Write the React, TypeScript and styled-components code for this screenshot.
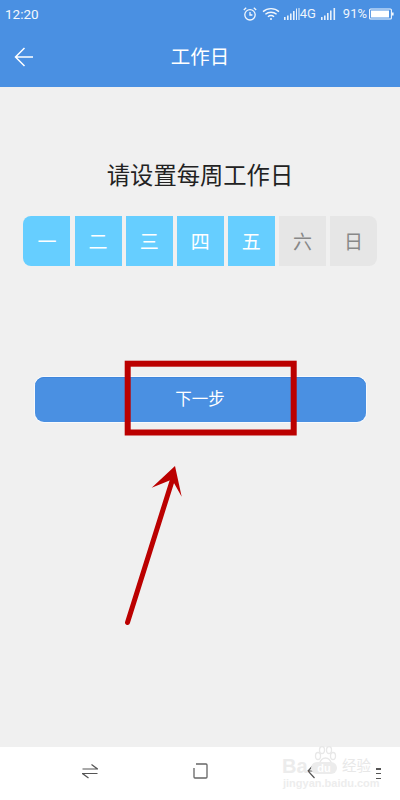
import React from "react";
import styled, { createGlobalStyle } from "styled-components";

const Global = createGlobalStyle`
  html, body { margin: 0; padding: 0; background: #f0f0f0; }
  #root { width: 400px; height: 800px; }
`;
const FONT = `"Roboto", "Noto Sans CJK SC", sans-serif`;

const Page = styled.div`
  position: relative; width: 400px; height: 800px; overflow: hidden;
  display: flex; flex-direction: column; background: #f0f0f0; font-family: ${FONT};
`;
const Header = styled.header`
  height: 87px; flex: none; background: #4a90e2; color: #fff;
  display: flex; flex-direction: column;
`;
const StatusBar = styled.div`
  height: 28px; display: flex; align-items: center; justify-content: space-between;
  padding: 0 5px 0 5px;
`;
const Clock = styled.span`font-size: 13.5px; line-height: 28px; color: #f4f8fd;`;
const StatusIcons = styled.div`display: flex; align-items: center;`;
const StatusText = styled.span<{ $ml: number }>`
  font-size: 13px; line-height: 28px; margin-left: ${p => p.$ml}px; color: #eef5fc;
`;
const TitleRow = styled.div`
  flex: 1; position: relative; display: flex; align-items: center; justify-content: center;
`;
const Title = styled.h1`margin: 0; font-size: 19.5px; font-weight: 400; line-height: 60px;`;
const Back = styled.svg`position: absolute; left: 14px; top: 19px;`;
const Main = styled.main`
  flex: 1; display: flex; flex-direction: column; align-items: center;
  padding-top: 73px;
`;
const Prompt = styled.h2`
  margin: 0; font-size: 23.3px; line-height: 32px; font-weight: 400; color: #222;
`;
const Days = styled.div`
  margin-top: 24px; margin-left: 0.5px; display: grid; grid-template-columns: repeat(7, 47px); gap: 4.1px;
  border-radius: 8px; overflow: hidden;
`;
const Day = styled.div<{ $on: boolean }>`
  height: 50px; display: flex; align-items: center; justify-content: center;
  font-size: 19px; padding-bottom: 2px; box-sizing: border-box;
  background: ${p => (p.$on ? "#66ceff" : "#e6e6e6")};
  color: ${p => (p.$on ? "#fff" : "#888")};
`;
const NextButton = styled.button`
  margin-top: 111px; width: 331px; height: 44.5px; border: 0; border-radius: 9px; padding: 0 0 2px;
  background: #4a90e2; color: #fff; font: 400 16.5px ${FONT};
  box-shadow: inset 0 1px 0 #3f86dc, 0 0 0 1px #f8fafd;
`;
const NavBar = styled.nav`
  height: 53px; flex: none; background: #fff; position: relative;
  display: flex; align-items: center; padding-bottom: 6px; box-sizing: border-box;
`;
const NavSlot = styled.div<{ $w: number }>`
  width: ${p => p.$w}px; flex: none; display: flex; justify-content: center;
`;
const Annotation = styled.svg`position: absolute; left: 0; top: 0; pointer-events: none;`;
const Watermark = styled.div`
  position: absolute; left: 282px; top: 746px; width: 96px; height: 44px;
`;
const WmBai = styled.span`
  position: absolute; left: 0; top: 10px; font: 700 20px/20px "Liberation Sans", sans-serif; color: #ececec;
`;
const WmDu = styled.span`
  position: absolute; left: 29px; top: 16px; width: 26px; height: 12px; border-radius: 6px;
  text-align: center; background: #ececec; color: #fff;
  font: 700 11px/12px "Liberation Sans", sans-serif;
`;
const WmJing = styled.span`
  position: absolute; left: 1px; top: 31px; font: 700 11px/13px "Liberation Sans", sans-serif;
  color: #ededed; white-space: nowrap;
`;
const WmCn = styled.span`
  position: absolute; left: 60px; top: 11px; font: 400 14.5px/16px "Noto Sans CJK SC", sans-serif; color: #e8e8e8;
`;
const WmPaw = styled.svg`position: absolute; left: 28px; top: 0;`;
const NavEdge = styled.div`
  position: absolute; left: 376px; top: 768px; width: 5px; height: 11px;
  display: flex; flex-direction: column; justify-content: space-between;
`;
const NavEdgeBar = styled.i`display: block; height: 1.5px; background: #555;`;

const days = ["一", "二", "三", "四", "五", "六", "日"];

export default function App() {
  return (
    <Page>
      <Global />
      <Header>
        <StatusBar>
          <Clock>12:20</Clock>
          <StatusIcons>
            <svg width="16" height="16" viewBox="0 0 16 16" fill="none" stroke="#f2f7fd" strokeWidth="1.3">
              <circle cx="8" cy="8.8" r="5.2" /><path d="M8 6v3h2.4M1.8 4 4.2 1.8M14.2 4 11.8 1.8" />
            </svg>
            <svg width="18" height="14" viewBox="0 0 18 14" fill="none" stroke="#f2f7fd" strokeWidth="1.4" style={{ marginLeft: 4 }}>
              <path d="M1 4.6c4.6-4 11.4-4 16 0M3.4 7.3c3.2-2.7 8-2.7 11.2 0M5.9 9.8c1.8-1.4 4.400-1.400 6.200 0" /><circle cx="9" cy="12" r="1" fill="#f2f7fd" stroke="none" />
            </svg>
            <svg width="16" height="14" viewBox="0 0 16 14" fill="#e8f1fb" style={{ marginLeft: 4 }}>
              <path d="M0 10h1.600v3H0zM3 8.500h1.600V13H3zM6 6.500h1.600V13H6zM9 4h1.600v9H9zM12 1.500h1v11.500h-1zM14.500 1h1v12h-1z" />
            </svg>
            <StatusText $ml={0}>4G</StatusText>
            <svg width="16" height="14" viewBox="0 0 16 14" fill="#e8f1fb" style={{ marginLeft: 5 }}>
              <path d="M0 10h1.600v3H0zM3 8.500h1.600V13H3zM6 6h1.600v7H6zM9 3.500h1.600V13H9zM12.500 1h1.600v12h-1.600z" />
            </svg>
            <StatusText $ml={6}>91%</StatusText>
            <svg width="26" height="12" viewBox="0 0 26 12" style={{ marginLeft: 2 }}>
              <rect x="0.600" y="1" width="21.800" height="10" rx="1" fill="none" stroke="#f2f7fd" strokeWidth="1.100" />
              <rect x="2" y="2.500" width="18" height="7" fill="#fff" />
              <rect x="23" y="4.500" width="1.600" height="3" fill="#f2f7fd" />
            </svg>
          </StatusIcons>
        </StatusBar>
        <TitleRow>
          <Back width="20" height="20" viewBox="0 0 20 20" fill="none" stroke="#fff" strokeWidth="1.500">
            <path d="M1.500 10H19M10.500 1 1.500 10l9 9" />
          </Back>
          <Title>工作日</Title>
        </TitleRow>
      </Header>
      <Main>
        <Prompt>请设置每周工作日</Prompt>
        <Days>
          {days.map((d, i) => <Day key={d} $on={i < 5}>{d}</Day>)}
        </Days>
        <NextButton>下一步</NextButton>
      </Main>
      <NavBar>
        <NavSlot $w={179}>
          <svg width="16" height="16" viewBox="0 0 16 16" fill="none" stroke="#555" strokeWidth="1.200">
            <path d="M0.500 6H15.500L9.500 1.500M15.500 10.500H0.500L6.500 15" />
          </svg>
        </NavSlot>
        <NavSlot $w={44}>
          <svg width="16" height="16" viewBox="0 0 16 16" fill="none" stroke="#666" strokeWidth="1.300">
            <path d="M1 5V14q0 1 1 1h11q1 0 1-1V2q0-1-1-1H3" />
          </svg>
        </NavSlot>
        <NavSlot $w={184}>
          <svg width="16" height="16" viewBox="0 0 16 16" fill="none" stroke="#555" strokeWidth="1.200">
            <path d="M1 8H15M7.500 1 1 8l6.500 7" />
          </svg>
        </NavSlot>
      </NavBar>
      <Watermark>
        <WmPaw width="30" height="20" viewBox="0 0 30 20" fill="none" stroke="#e8e8e8" strokeWidth="1.300">
          <ellipse cx="8" cy="10" rx="2.500" ry="3.500" /><ellipse cx="12" cy="4" rx="2.500" ry="3.500" />
          <ellipse cx="19" cy="4" rx="2.500" ry="3.500" /><ellipse cx="23" cy="10" rx="2.500" ry="3.500" />
          <path d="M9 19c1-4 3-7 6.500-7s5.500 3 6.500 7" />
        </WmPaw>
        <WmBai>Ba</WmBai>
        <WmDu>du</WmDu>
        <WmCn>经验</WmCn>
        <WmJing>jingyan.baidu.com</WmJing>
      </Watermark>
      <NavEdge><NavEdgeBar /><NavEdgeBar /><NavEdgeBar /></NavEdge>
      <Annotation width="400" height="800" viewBox="0 0 400 800">
        <rect x="127.700" y="363.700" width="166" height="68.800" fill="none" stroke="#bb0000" strokeWidth="6" />
        <path d="M127.500 622.500 173 478" stroke="#bb0000" strokeWidth="5" strokeLinecap="round" fill="none" />
        <path d="M175 466 151.700 487.700 172 479.500 181.700 496.700z" fill="#bb0000" />
      </Annotation>
    </Page>
  );
}
